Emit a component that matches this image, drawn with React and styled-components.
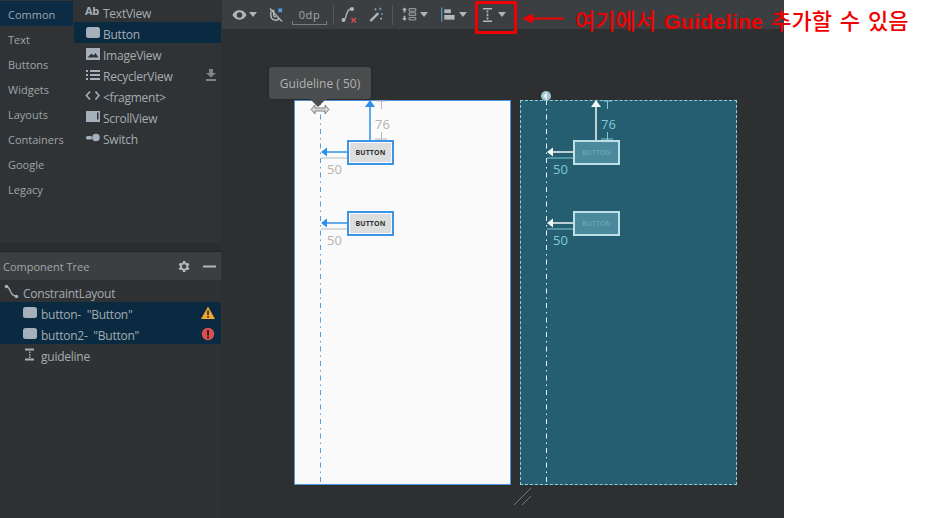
import React from "react";
import styled, { createGlobalStyle } from "styled-components";

const Global = createGlobalStyle`
  html, body { margin: 0; padding: 0; background: #fff; }
  #root { width: 925px; height: 518px; overflow: hidden; }
  * { box-sizing: border-box; }
`;

const Page = styled.div`
  position: relative;
  width: 925px;
  height: 518px;
  background: #fff;
  font-family: "Open Sans", "Noto Sans", sans-serif;
`;
const Studio = styled.div`
  display: flex;
  width: 784px;
  height: 518px;
  background: #2e2f30;
`;
const Side = styled.aside`
  width: 222px;
  flex: none;
  display: flex;
  flex-direction: column;
  padding-right: 1px;
  background: #2f3234;
  color: #a8afb4;
  font-size: 12px;
  letter-spacing: -0.25px;
`;
const Palette = styled.div`
  display: flex;
  height: 243px;
  padding-top: 1px;
  background: #303335;
`;
const Categories = styled.div`
  width: 74px;
  flex: none;
  display: flex;
  flex-direction: column;
`;
const Category = styled.div`
  height: 25px;
  width: 73px;
  display: flex;
  align-items: center;
  padding: 1px 0 0 8px;
  font-size: 11px;
  letter-spacing: 0;
  color: #9ea5aa;
  background: ${(p) => (p.$on ? "#0c2b44" : "transparent")};
`;
const Items = styled.div`
  flex: 1;
  display: flex;
  flex-direction: column;
`;
const Item = styled.div`
  height: 21px;
  display: flex;
  align-items: center;
  gap: 3px;
  padding: 3px 0 0 11px;
  color: #a5acb1;
  background: ${(p) => (p.$on ? "#0a2a41" : "transparent")};
`;
const ItemIcon = styled.svg`
  width: 15px;
  height: 15px;
  flex: none;
  margin-top: -3px;
  color: #a5b0ba;
`;
const Trailing = styled.svg`
  width: 12px;
  height: 12px;
  margin-left: auto;
  margin-right: 4px;
  margin-top: -3px;
  color: #7d8487;
`;
const Gutter = styled.div`
  height: 9px;
  background: #2b2d2e;
  border-bottom: 1px solid #232425;
`;
const TreeHeader = styled.div`
  height: 28px;
  display: flex;
  align-items: center;
  padding: 0 5px 0 3px;
  background: #3c3f41;
  font-size: 11px;
  letter-spacing: 0;
  color: #a0a6aa;
`;
const HeaderIcons = styled.div`
  margin-left: auto;
  display: flex;
  align-items: center;
  gap: 12px;
  color: #b2b6b8;
`;
const Tree = styled.div`
  display: flex;
  flex-direction: column;
  padding-top: 1px;
`;
const TreeRow = styled.div`
  height: 21px;
  display: flex;
  align-items: center;
  gap: 4px;
  padding: 3px 6px 0 ${(p) => p.$indent}px;
  color: #a5acb1;
  background: ${(p) => (p.$on ? "#0a2a41" : "transparent")};
`;
const TreeIcon = styled.svg`
  width: 15px;
  height: 15px;
  flex: none;
  margin-top: -4px;
  color: #a5b0ba;
`;
const Status = styled.svg`
  width: 14px;
  height: 14px;
  margin-left: auto;
  margin-top: -3px;
`;
const Main = styled.main`
  flex: 1;
  display: flex;
  flex-direction: column;
  min-width: 0;
`;
const Toolbar = styled.div`
  height: 29px;
  display: flex;
  align-items: center;
  padding-left: 10px;
  background: #3c3f41;
  color: #b4b8ba;
`;
const Tool = styled.div`
  display: flex;
  align-items: center;
  gap: ${(p) => p.$inner ?? 2}px;
  margin-right: ${(p) => p.$gap ?? 0}px;
`;
const Caret = styled.span`
  width: 0;
  height: 0;
  border-left: 4.5px solid transparent;
  border-right: 4.5px solid transparent;
  border-top: 5px solid #b0b4b6;
`;
const Divider = styled.span`
  width: 1px;
  height: 20px;
  background: #55585a;
  margin-right: ${(p) => p.$gap}px;
`;
const ZeroDp = styled.div`
  position: relative;
  width: 35px;
  height: 18px;
  margin: 2px 6px 0 0;
  font-size: 11px;
  line-height: 16px;
  text-align: center;
  letter-spacing: 0.6px;
  color: #a5a9ab;
  border-bottom: 1px solid #7a7d7f;
  &::before,
  &::after {
    content: "";
    position: absolute;
    bottom: -1px;
    width: 1px;
    height: 4px;
    background: #7a7d7f;
  }
  &::before { left: 0; }
  &::after { right: 0; }
`;
const Canvas = styled.div`
  position: relative;
  flex: 1;
  background: #2e2f30;
`;
const Sheet = styled.div`
  position: absolute;
  left: ${(p) => p.$x}px;
  top: 71px;
  width: 217px;
  height: 385px;
  background: ${(p) => (p.$blue ? "#255e70" : "#fafafa")};
  border: ${(p) => (p.$blue ? "1px dashed #8fd0da" : "1px solid #4f93d8")};
`;
const Wires = styled.svg`
  position: absolute;
  left: -1px;
  top: -1px;
  width: 217px;
  height: 385px;
  overflow: visible;
`;
const Widget = styled.div`
  position: absolute;
  left: 52px;
  top: ${(p) => p.$y}px;
  width: 47px;
  height: 25px;
  display: flex;
  align-items: center;
  justify-content: center;
  border: ${(p) => (p.$blue ? "2px solid #bfe0e6" : "2px solid #3b94e8")};
  background: ${(p) => (p.$blue ? "#4b8a9d" : "#fafafa")};
`;
const WidgetFace = styled.div`
  width: 41px;
  height: 19px;
  flex: none;
  display: flex;
  align-items: center;
  justify-content: center;
  font-size: 7px;
  font-weight: ${(p) => (p.$blue ? 400 : 700)};
  letter-spacing: 0.1px;
  color: ${(p) => (p.$blue ? "#6fb2c2" : "#333")};
  background: ${(p) => (p.$blue ? "transparent" : "#dcdddd")};
  border-radius: 1px;
`;
const Dim = styled.span`
  position: absolute;
  left: ${(p) => p.$x}px;
  top: ${(p) => p.$y}px;
  font-size: 13px;
  line-height: 16px;
  color: ${(p) => (p.$blue ? "#7fcbd8" : "#b3b3b3")};
`;
const Tooltip = styled.div`
  position: absolute;
  left: 47px;
  top: 38px;
  width: 102px;
  height: 32px;
  display: flex;
  align-items: center;
  justify-content: center;
  border-radius: 3px;
  background: #4a4c4d;
  color: #b0b2b3;
  font-size: 12px;
  box-shadow: 0 0 2px #222;
  &::after {
    content: "";
    position: absolute;
    left: 41px;
    top: 32px;
    border-left: 8px solid transparent;
    border-right: 8px solid transparent;
    border-top: 8px solid #4a4c4d;
  }
`;
const GuideHandle = styled.svg`
  position: absolute;
  left: 88px;
  top: 74px;
`;
const GuideDot = styled.svg`
  position: absolute;
  left: 318px;
  top: 61px;
`;
const Resize = styled.svg`
  position: absolute;
  left: 292px;
  top: 459px;
  width: 18px;
  height: 18px;
  color: #777;
`;
const RedBox = styled.div`
  position: absolute;
  left: 475px;
  top: 1px;
  width: 42px;
  height: 33px;
  border: 3px solid #f00000;
`;
const RedArrow = styled.svg`
  position: absolute;
  left: 521px;
  top: 12px;
  width: 44px;
  height: 13px;
`;
const Note = styled.div`
  position: absolute;
  left: 575px;
  top: 3px;
  font-family: "Noto Sans CJK KR", "Noto Sans", sans-serif;
  font-size: 22px;
  line-height: 32px;
  font-weight: 500;
  color: #f00000;
  white-space: nowrap;
  word-spacing: 3px;
`;
const Latin = styled.span`
  font-family: "Liberation Sans", sans-serif;
  font-weight: 700;
  font-size: 21px;
  letter-spacing: 0.4px;
`;

const Chip = () => <rect x="1" y="2" width="14" height="11" rx="2.5" fill="currentColor" />;

const Diagram = ({ blue }) => {
  const arrow = blue ? "#f2f7f8" : "#2f8ee8";
  const guide = blue ? "#e6f2f4" : "#5a9fdc";
  const dim = blue ? "#7fcbd8" : "#b9b9b9";
  const left = (y) => (
    <g key={y}>
      <line x1="33" x2="53" y1={y} y2={y} stroke={arrow} strokeWidth="1.5" />
      <polygon points={`27,${y} 33,${y - 4.5} 33,${y + 4.5}`} fill={arrow} />
      <line x1="27" x2="53" y1={y + 6} y2={y + 6} stroke={dim} strokeWidth="1" />
    </g>
  );
  return (
    <Wires viewBox="0 0 217 385">
      <line x1="26.5" x2="26.5" y1="0" y2="385" stroke={guide} strokeWidth="1" strokeDasharray="5 4 1.500 4" />
      <line x1="76" x2="76" y1="6" y2="41" stroke={arrow} strokeWidth="1.5" />
      <polygon points="76,0 71,7 81,7" fill={arrow} />
      <path d="M83 1h9M87.500 1v8M87.500 32v8M81 39h12" stroke={dim} fill="none" />
      {left(52)}
      {left(123)}
    </Wires>
  );
};

export default function App() {
  return (
    <Page>
      <Global />
      <Studio>
        <Side>
          <Palette>
            <Categories>
              <Category $on>Common</Category>
              <Category>Text</Category>
              <Category>Buttons</Category>
              <Category>Widgets</Category>
              <Category>Layouts</Category>
              <Category>Containers</Category>
              <Category>Google</Category>
              <Category>Legacy</Category>
            </Categories>
            <Items>
              <Item>
                <ItemIcon viewBox="0 0 15 15">
                  <text x="0" y="11" fontSize="11" fontWeight="700" fill="currentColor" fontFamily="Open Sans">Ab</text>
                </ItemIcon>
                TextView
              </Item>
              <Item $on>
                <ItemIcon viewBox="0 0 15 15"><Chip /></ItemIcon>
                Button
              </Item>
              <Item>
                <ItemIcon viewBox="0 0 15 15">
                  <path fillRule="evenodd" fill="currentColor" d="M1 2h14v12H1zM2.500 11.500h11L10.500 7 8.500 9.500 6.500 7.500z" />
                </ItemIcon>
                ImageView
              </Item>
              <Item>
                <ItemIcon viewBox="0 0 15 15">
                  <path fill="currentColor" d="M1 3h2v2H1zM5 3h10v2H5zM1 7h2v2H1zM5 7h10v2H5zM1 11h2v2H1zM5 11h10v2H5z" />
                </ItemIcon>
                RecyclerView
                <Trailing viewBox="0 0 12 12">
                  <path fill="currentColor" d="M4 0h4v4h3L6 8.500 1 4h3zM1 10h10v2H1z" />
                </Trailing>
              </Item>
              <Item>
                <ItemIcon viewBox="0 0 15 15">
                  <path fill="none" stroke="currentColor" strokeWidth="1.600" d="M5 3.500 1.500 7.500 5 11.500M10.500 3.500 14 7.500 10.500 11.500" />
                </ItemIcon>
                &lt;fragment&gt;
              </Item>
              <Item>
                <ItemIcon viewBox="0 0 15 15">
                  <path fillRule="evenodd" fill="currentColor" d="M1 2h14v11H1zM12 3.500v7h1.500v-7z" />
                </ItemIcon>
                ScrollView
              </Item>
              <Item>
                <ItemIcon viewBox="0 0 15 15">
                  <rect x="1" y="6" width="6" height="3.500" rx="1.500" fill="currentColor" />
                  <circle cx="11" cy="7.500" r="3.800" fill="currentColor" />
                </ItemIcon>
                Switch
              </Item>
            </Items>
          </Palette>
          <Gutter />
          <TreeHeader>
            Component Tree
            <HeaderIcons>
              <svg width="15" height="15" viewBox="0 0 24 24" fill="currentColor">
                <path d="M19.400 13a7.500 7.500 0 0 0 0-2l2.100-1.600-2-3.500-2.500 1a7.500 7.500 0 0 0-1.700-1L15 3.200h-4l-.4 2.700a7.500 7.500 0 0 0-1.700 1l-2.500-1-2 3.500L6.500 11a7.500 7.500 0 0 0 0 2l-2.100 1.600 2 3.500 2.500-1a7.500 7.500 0 0 0 1.700 1l.4 2.700h4l.4-2.700a7.500 7.500 0 0 0 1.700-1l2.500 1 2-3.500zM13 15.500a3.500 3.500 0 1 1 0-7 3.500 3.500 0 0 1 0 7z" />
              </svg>
              <svg width="13" height="3" viewBox="0 0 13 3"><rect width="13" height="2" y="0.500" fill="currentColor" /></svg>
            </HeaderIcons>
          </TreeHeader>
          <Tree>
            <TreeRow $indent={4}>
              <TreeIcon viewBox="0 0 15 15">
                <circle cx="2.500" cy="2.500" r="1.800" fill="currentColor" />
                <circle cx="12.500" cy="12.500" r="1.800" fill="currentColor" />
                <path d="M3 3c4 0 2 9 9 9" fill="none" stroke="currentColor" strokeWidth="1.300" />
              </TreeIcon>
              ConstraintLayout
            </TreeRow>
            <TreeRow $indent={22} $on>
              <TreeIcon viewBox="0 0 15 15"><Chip /></TreeIcon>
              button- &nbsp;"Button"
              <Status viewBox="0 0 14 14">
                <path d="M7 0.500 14 13H0z" fill="#f0a732" />
                <rect x="6.200" y="4.500" width="1.700" height="4.500" fill="#2b2d2e" />
                <rect x="6.200" y="10" width="1.700" height="1.700" fill="#2b2d2e" />
              </Status>
            </TreeRow>
            <TreeRow $indent={22} $on>
              <TreeIcon viewBox="0 0 15 15"><Chip /></TreeIcon>
              button2- &nbsp;"Button"
              <Status viewBox="0 0 14 14">
                <circle cx="7" cy="7" r="6.200" fill="#d9504f" />
                <rect x="6.100" y="3" width="1.900" height="5.500" fill="#2b1d20" />
                <rect x="6.100" y="9.500" width="1.900" height="1.900" fill="#2b1d20" />
              </Status>
            </TreeRow>
            <TreeRow $indent={22}>
              <TreeIcon viewBox="0 0 15 15">
                <path fill="currentColor" d="M3 1.500h9v2H3zM3 11.500h9v2H3zM7 4.500h1.500v1.500H7zM7 7h1.500v1.500H7zM7 9.500h1.500V11H7z" />
              </TreeIcon>
              guideline
            </TreeRow>
          </Tree>
        </Side>
        <Main>
          <Toolbar>
            <Tool $gap={12}>
              <svg width="15" height="12" viewBox="0 0 16 12">
                <path fillRule="evenodd" fill="#b4b8ba" d="M8 1c3.500 0 6.200 2.200 7.500 5-1.300 2.800-4 5-7.500 5S1.800 8.800.5 6C1.800 3.200 4.500 1 8 1zm0 2a3 3 0 1 0 0 6 3 3 0 0 0 0-6z" />
              </svg>
              <Caret />
            </Tool>
            <Tool $gap={9}>
              <svg width="14" height="16" viewBox="0 0 15 16">
                <path d="M2 4v4.500a5 5 0 0 0 9 3M2 3h3v5a2 2 0 0 0 3 1.700" fill="none" stroke="#b4b8ba" strokeWidth="1.500" />
                <path d="M1 1 14 15" stroke="#b4b8ba" strokeWidth="1.300" />
                <rect x="10" y="1" width="4" height="4" fill="#4f9fe0" />
              </svg>
            </Tool>
            <ZeroDp>0dp</ZeroDp>
            <Divider $gap={7} />
            <Tool $gap={12}>
              <svg width="16" height="18" viewBox="0 0 16 18">
                <circle cx="2.500" cy="14" r="2" fill="#b4b8ba" />
                <circle cx="11" cy="3" r="2" fill="#b4b8ba" />
                <path d="M3 13.500c3 0 1.500-10.500 7-10.500" fill="none" stroke="#b4b8ba" strokeWidth="1.300" />
                <path d="M10.500 12l4.500 4.500M15 12l-4.500 4.500" stroke="#d24b4b" strokeWidth="1.500" />
              </svg>
            </Tool>
            <Tool $gap={9}>
              <svg width="14" height="17" viewBox="0 0 15 17">
                <path d="M1.500 15.500 10 7" stroke="#b4b8ba" strokeWidth="2.500" />
                <path d="M12 1v3M10.500 2.500h3M14 7v2M13 8h2" stroke="#4f9fe0" />
                <path d="M7 2v2M6 3h2M13 12v2M12 13h2" stroke="#b4b8ba" />
              </svg>
            </Tool>
            <Divider $gap={9} />
            <Tool $gap={13} $inner={3}>
              <svg width="15" height="17" viewBox="0 0 18 17">
                <path fill="#b4b8ba" d="M3 0l3 3H4v3H2V3H0zM3 16l3-3H4v-3H2v3H0z" />
                <path fill="none" stroke="#b4b8ba" d="M8.500 1.500h8v3h-8zM8.500 6.500h8v3h-8zM8.500 12h8v3h-8z" />
              </svg>
              <Caret />
            </Tool>
            <Tool $gap={16} $inner={3}>
              <svg width="15" height="15" viewBox="0 0 16 15">
                <rect x="0" y="0" width="1.500" height="15" fill="#4f8fb8" />
                <rect x="3.500" y="2" width="7" height="4" fill="#b4b8ba" />
                <rect x="3.500" y="8" width="11" height="5" fill="#b4b8ba" />
              </svg>
              <Caret />
            </Tool>
            <Tool $inner={6}>
              <svg width="9" height="14" viewBox="0 0 9 14">
                <path fill="#b4b8ba" d="M0 0h9v1.500H0zM0 12.500h9V14H0zM3.700 2.500h1.600v2H3.700zM3.700 5.700h1.600v2.600H3.700zM3.700 9.500h1.600v2H3.700z" />
              </svg>
              <Caret />
            </Tool>
          </Toolbar>
          <Canvas>
            <Sheet $x={72}>
              <Diagram />
              <Widget $y={39}><WidgetFace>BUTTON</WidgetFace></Widget>
              <Widget $y={110}><WidgetFace>BUTTON</WidgetFace></Widget>
              <Dim $x={80} $y={15}>76</Dim>
              <Dim $x={32} $y={60}>50</Dim>
              <Dim $x={32} $y={131}>50</Dim>
            </Sheet>
            <Sheet $x={298} $blue>
              <Diagram blue />
              <Widget $y={39} $blue><WidgetFace $blue>BUTTON</WidgetFace></Widget>
              <Widget $y={110} $blue><WidgetFace $blue>BUTTON</WidgetFace></Widget>
              <Dim $x={80} $y={15} $blue>76</Dim>
              <Dim $x={32} $y={60} $blue>50</Dim>
              <Dim $x={32} $y={131} $blue>50</Dim>
            </Sheet>
            <Tooltip>Guideline ( 50)</Tooltip>
            <GuideHandle width="20" height="13" viewBox="0 0 20 13">
              <path d="M1 6.500 5 2v3h10V2l4 4.500L15 11V8H5v3z" fill="#d8d8d8" stroke="#666" strokeWidth="0.800" />
            </GuideHandle>
            <GuideDot width="12" height="12" viewBox="0 0 12 12">
              <circle cx="6" cy="6" r="5" fill="#9fc6d2" />
              <path d="M7 2 3 6l4 4z" fill="#e4eef1" />
            </GuideDot>
            <Resize viewBox="0 0 18 18">
              <path d="M0 17 17 0M8 17l9-9" stroke="currentColor" strokeWidth="1" fill="none" />
            </Resize>
          </Canvas>
        </Main>
      </Studio>
      <RedBox />
      <RedArrow viewBox="0 0 44 13">
        <path d="M1 6.500 12 1.500v4h31v2H12v4z" fill="#f00000" />
      </RedArrow>
      <Note>여기에서 <Latin>Guideline</Latin> 추가할 수 있음</Note>
    </Page>
  );
}
